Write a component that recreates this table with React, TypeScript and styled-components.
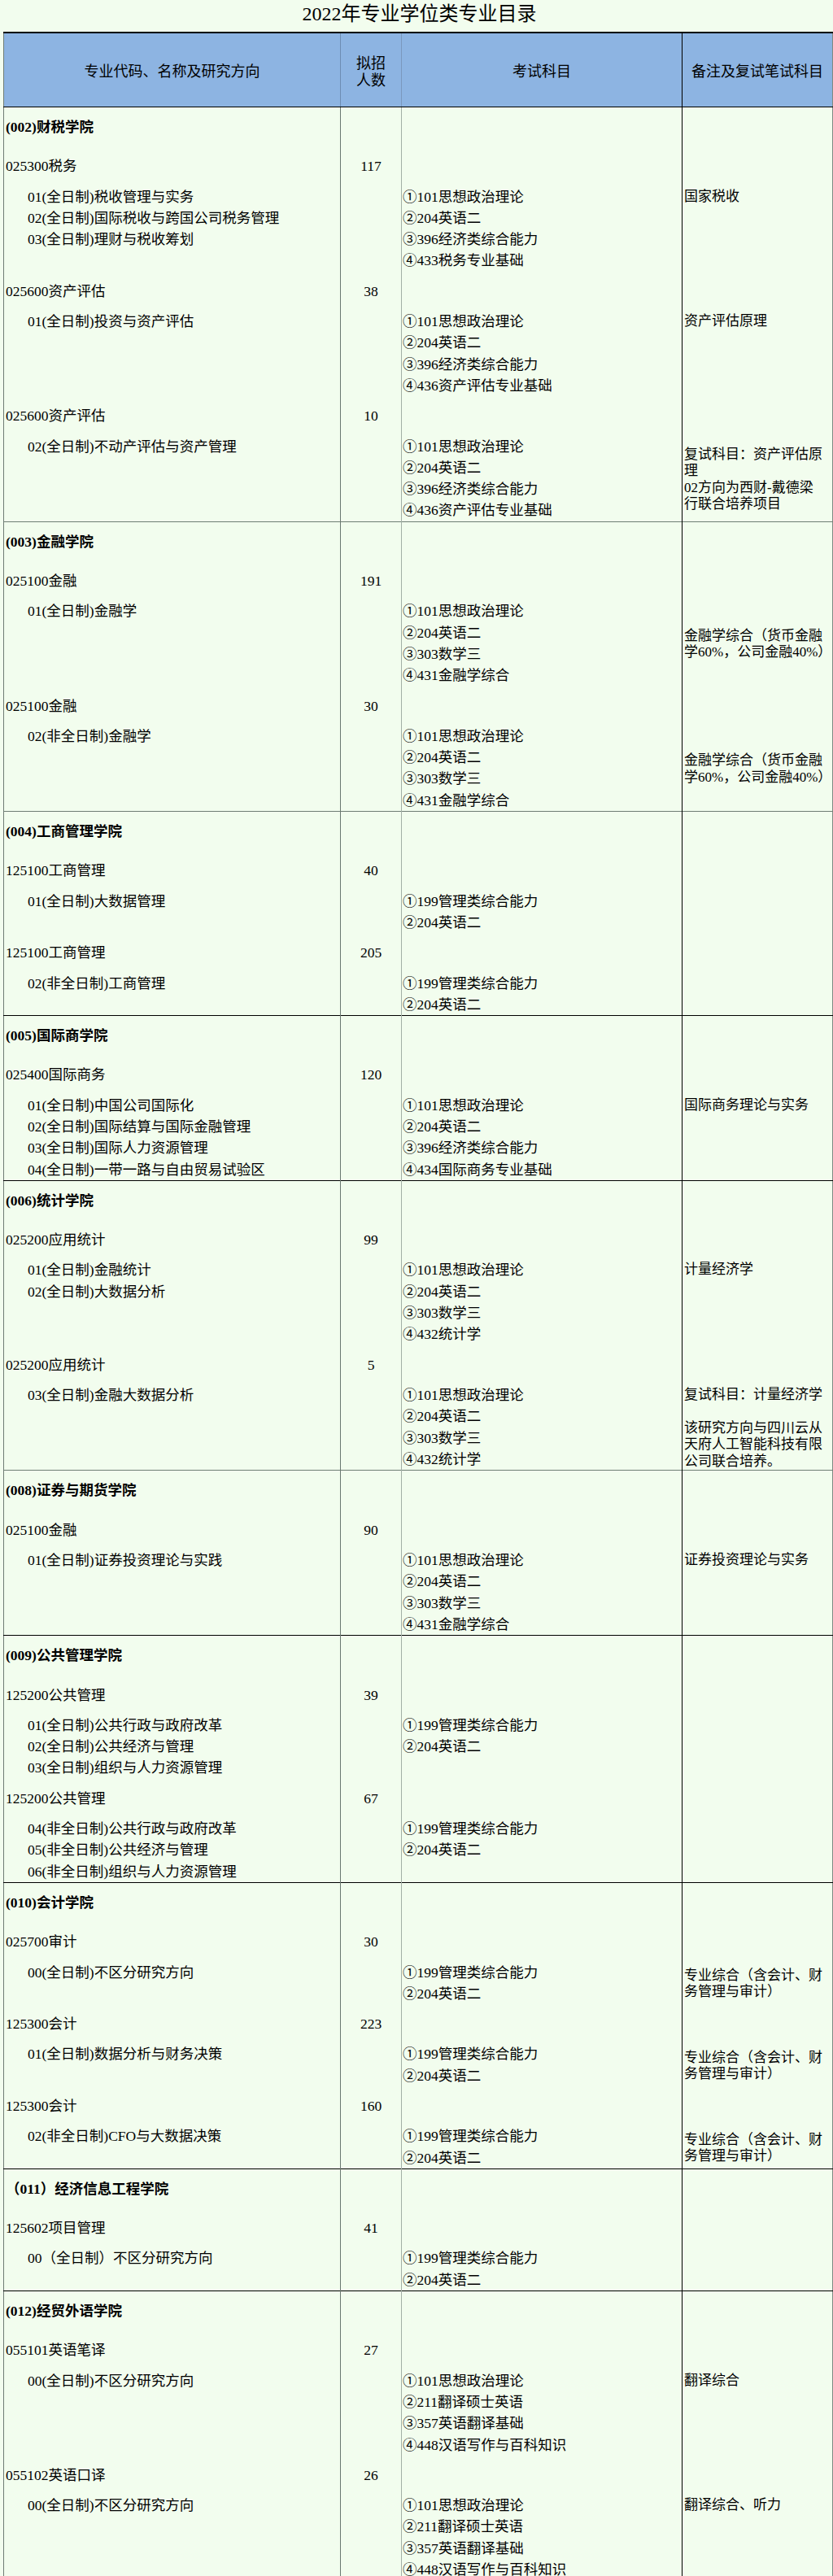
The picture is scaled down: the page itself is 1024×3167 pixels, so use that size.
import React from 'react';
import styled, { createGlobalStyle } from 'styled-components';

const GlobalStyle = createGlobalStyle`
  html, body {
    margin: 0;
    padding: 0;
    background: #f2fdee;
  }
  body {
    font-family: "Liberation Serif", "Noto Sans CJK SC", serif;
    color: #000;
  }
`;

const Page = styled.div`
  width: 1024px;
  box-sizing: border-box;
  padding: 0 1px 0 4px;
`;

const Title = styled.h1`
  margin: 0;
  height: 39px;
  line-height: 34px;
  font-size: 24px;
  font-weight: 400;
  text-align: center;
  padding-left: 4px;
  white-space: nowrap;
`;

const Table = styled.table`
  width: 1019px;
  border-collapse: collapse;
  table-layout: fixed;
  font-size: 17.5px;
  line-height: 26.3px;
  border-top: 2px solid #000;
  border-left: 1px solid #6f7d74;
  border-right: 1px solid #7d8a82;
`;

const Col = styled.col<{ $w: number }>`
  width: ${(p) => p.$w}px;
`;

const HeadCell = styled.th<{ $line: string }>`
  background: #8db4e2;
  height: 85px;
  padding: 5px 0 0;
  font-size: 18px;
  line-height: 21px;
  font-weight: 400;
  text-align: center;
  vertical-align: middle;
  white-space: nowrap;
  border-right: 1px solid ${(p) => p.$line};
  border-bottom: 1px solid #000;
`;

const Section = styled.tbody<{ $edge: 'dark' | 'soft' | 'none' }>`
  border-bottom: ${(p) =>
    p.$edge === 'dark' ? '1px solid #000' : p.$edge === 'soft' ? '1px solid #6f7d74' : 'none'};
`;

const CollegeRow = styled.tr`
  & > td {
    padding-top: 11px;
    padding-bottom: 11px;
  }
`;

const ProgramRow = styled.tr`
  & > td {
    padding-top: 11px;
    padding-bottom: 0;
  }
`;

const DetailRow = styled.tr`
  & > td {
    padding-top: 11px;
    padding-bottom: 0;
  }
`;

const NameCell = styled.td`
  vertical-align: top;
  padding-left: 2px;
  padding-right: 0;
  white-space: nowrap;
  overflow: hidden;
  border-right: 1px solid #6a7870;
`;

const CountCell = styled.td`
  vertical-align: top;
  padding-left: 0;
  padding-right: 0;
  text-align: center;
  white-space: nowrap;
  border-right: 1px solid #a2b0a6;
`;

const ExamCell = styled.td`
  vertical-align: top;
  padding-left: 1px;
  padding-right: 0;
  white-space: nowrap;
  overflow: hidden;
  border-right: 1px solid #000;
`;

const NoteCell = styled.td<{ $middle?: boolean }>`
  vertical-align: ${(p) => (p.$middle ? 'middle' : 'top')};
  padding-left: 2px;
  padding-right: 0;
  white-space: nowrap;
  overflow: hidden;
`;

const CollegeName = styled.div`
  font-weight: 700;
`;

const DirectionLine = styled.div`
  padding-left: 27px;
`;

const ExamLine = styled.div``;

const NoteBlock = styled.div`
  padding-top: 3px;
  font-size: 17px;
  line-height: 20.5px;
`;

const NoteLine = styled.div`
  min-height: 20.5px;
`;

type Program = {
  code: string;
  count: string;
  directions: string[];
  exams: string[];
  notes?: string[];
  middle?: boolean;
};

type SectionData = {
  college: string;
  edge: 'dark' | 'soft' | 'none';
  programs: Program[];
};

const econ433 = ['①101思想政治理论', '②204英语二', '③396经济类综合能力', '④433税务专业基础'];
const econ436 = ['①101思想政治理论', '②204英语二', '③396经济类综合能力', '④436资产评估专业基础'];
const fin431 = ['①101思想政治理论', '②204英语二', '③303数学三', '④431金融学综合'];
const mgmt = ['①199管理类综合能力', '②204英语二'];
const stat432 = ['①101思想政治理论', '②204英语二', '③303数学三', '④432统计学'];
const trans = ['①101思想政治理论', '②211翻译硕士英语', '③357英语翻译基础', '④448汉语写作与百科知识'];
const finNote = ['金融学综合（货币金融', '学60%，公司金融40%）'];
const accNote = ['专业综合（含会计、财', '务管理与审计）'];

const sections: SectionData[] = [
  {
    college: '(002)财税学院',
    edge: 'soft',
    programs: [
      {
        code: '025300税务',
        count: '117',
        directions: ['01(全日制)税收管理与实务', '02(全日制)国际税收与跨国公司税务管理', '03(全日制)理财与税收筹划'],
        exams: econ433,
        notes: ['国家税收'],
      },
      {
        code: '025600资产评估',
        count: '38',
        directions: ['01(全日制)投资与资产评估'],
        exams: econ436,
        notes: ['资产评估原理'],
      },
      {
        code: '025600资产评估',
        count: '10',
        directions: ['02(全日制)不动产评估与资产管理'],
        exams: econ436,
        notes: ['复试科目：资产评估原', '理', '02方向为西财-戴德梁', '行联合培养项目'],
        middle: true,
      },
    ],
  },
  {
    college: '(003)金融学院',
    edge: 'soft',
    programs: [
      {
        code: '025100金融',
        count: '191',
        directions: ['01(全日制)金融学'],
        exams: fin431,
        notes: finNote,
        middle: true,
      },
      {
        code: '025100金融',
        count: '30',
        directions: ['02(非全日制)金融学'],
        exams: fin431,
        notes: finNote,
        middle: true,
      },
    ],
  },
  {
    college: '(004)工商管理学院',
    edge: 'dark',
    programs: [
      { code: '125100工商管理', count: '40', directions: ['01(全日制)大数据管理'], exams: mgmt },
      { code: '125100工商管理', count: '205', directions: ['02(非全日制)工商管理'], exams: mgmt },
    ],
  },
  {
    college: '(005)国际商学院',
    edge: 'dark',
    programs: [
      {
        code: '025400国际商务',
        count: '120',
        directions: [
          '01(全日制)中国公司国际化',
          '02(全日制)国际结算与国际金融管理',
          '03(全日制)国际人力资源管理',
          '04(全日制)一带一路与自由贸易试验区',
        ],
        exams: ['①101思想政治理论', '②204英语二', '③396经济类综合能力', '④434国际商务专业基础'],
        notes: ['国际商务理论与实务'],
      },
    ],
  },
  {
    college: '(006)统计学院',
    edge: 'soft',
    programs: [
      {
        code: '025200应用统计',
        count: '99',
        directions: ['01(全日制)金融统计', '02(全日制)大数据分析'],
        exams: stat432,
        notes: ['计量经济学'],
      },
      {
        code: '025200应用统计',
        count: '5',
        directions: ['03(全日制)金融大数据分析'],
        exams: stat432,
        notes: ['复试科目：计量经济学', '', '该研究方向与四川云从', '天府人工智能科技有限', '公司联合培养。'],
      },
    ],
  },
  {
    college: '(008)证券与期货学院',
    edge: 'dark',
    programs: [
      {
        code: '025100金融',
        count: '90',
        directions: ['01(全日制)证券投资理论与实践'],
        exams: fin431,
        notes: ['证券投资理论与实务'],
      },
    ],
  },
  {
    college: '(009)公共管理学院',
    edge: 'dark',
    programs: [
      {
        code: '125200公共管理',
        count: '39',
        directions: ['01(全日制)公共行政与政府改革', '02(全日制)公共经济与管理', '03(全日制)组织与人力资源管理'],
        exams: mgmt,
      },
      {
        code: '125200公共管理',
        count: '67',
        directions: ['04(非全日制)公共行政与政府改革', '05(非全日制)公共经济与管理', '06(非全日制)组织与人力资源管理'],
        exams: mgmt,
      },
    ],
  },
  {
    college: '(010)会计学院',
    edge: 'dark',
    programs: [
      {
        code: '025700审计',
        count: '30',
        directions: ['00(全日制)不区分研究方向'],
        exams: mgmt,
        notes: accNote,
        middle: true,
      },
      {
        code: '125300会计',
        count: '223',
        directions: ['01(全日制)数据分析与财务决策'],
        exams: mgmt,
        notes: accNote,
        middle: true,
      },
      {
        code: '125300会计',
        count: '160',
        directions: ['02(非全日制)CFO与大数据决策'],
        exams: mgmt,
        notes: accNote,
        middle: true,
      },
    ],
  },
  {
    college: '（011）经济信息工程学院',
    edge: 'dark',
    programs: [
      {
        code: '125602项目管理',
        count: '41',
        directions: ['00（全日制）不区分研究方向'],
        exams: mgmt,
      },
    ],
  },
  {
    college: '(012)经贸外语学院',
    edge: 'none',
    programs: [
      {
        code: '055101英语笔译',
        count: '27',
        directions: ['00(全日制)不区分研究方向'],
        exams: trans,
        notes: ['翻译综合'],
      },
      {
        code: '055102英语口译',
        count: '26',
        directions: ['00(全日制)不区分研究方向'],
        exams: trans,
        notes: ['翻译综合、听力'],
      },
    ],
  },
];

function ProgramBlock({ program }: { program: Program }) {
  return (
    <>
      <ProgramRow>
        <NameCell>{program.code}</NameCell>
        <CountCell>{program.count}</CountCell>
        <ExamCell />
        <NoteCell />
      </ProgramRow>
      <DetailRow>
        <NameCell>
          {program.directions.map((d) => (
            <DirectionLine key={d}>{d}</DirectionLine>
          ))}
        </NameCell>
        <CountCell />
        <ExamCell>
          {program.exams.map((e) => (
            <ExamLine key={e}>{e}</ExamLine>
          ))}
        </ExamCell>
        <NoteCell $middle={program.middle}>
          {program.notes && (
            <NoteBlock>
              {program.notes.map((n, i) => (
                <NoteLine key={i}>{n}</NoteLine>
              ))}
            </NoteBlock>
          )}
        </NoteCell>
      </DetailRow>
    </>
  );
}

export default function App() {
  return (
    <Page>
      <GlobalStyle />
      <Title>2022年专业学位类专业目录</Title>
      <Table>
        <colgroup>
          <Col $w={414} />
          <Col $w={75} />
          <Col $w={345} />
          <Col $w={185} />
        </colgroup>
        <thead>
          <tr>
            <HeadCell $line="#6d8db3">专业代码、名称及研究方向</HeadCell>
            <HeadCell $line="#7b98bd">
              拟招
              <br />
              人数
            </HeadCell>
            <HeadCell $line="#000">考试科目</HeadCell>
            <HeadCell $line="#7d8a82">备注及复试笔试科目</HeadCell>
          </tr>
        </thead>
        {sections.map((s) => (
          <Section key={s.college} $edge={s.edge}>
            <CollegeRow>
              <NameCell>
                <CollegeName>{s.college}</CollegeName>
              </NameCell>
              <CountCell />
              <ExamCell />
              <NoteCell />
            </CollegeRow>
            {s.programs.map((p, i) => (
              <ProgramBlock key={i} program={p} />
            ))}
          </Section>
        ))}
      </Table>
    </Page>
  );
}
